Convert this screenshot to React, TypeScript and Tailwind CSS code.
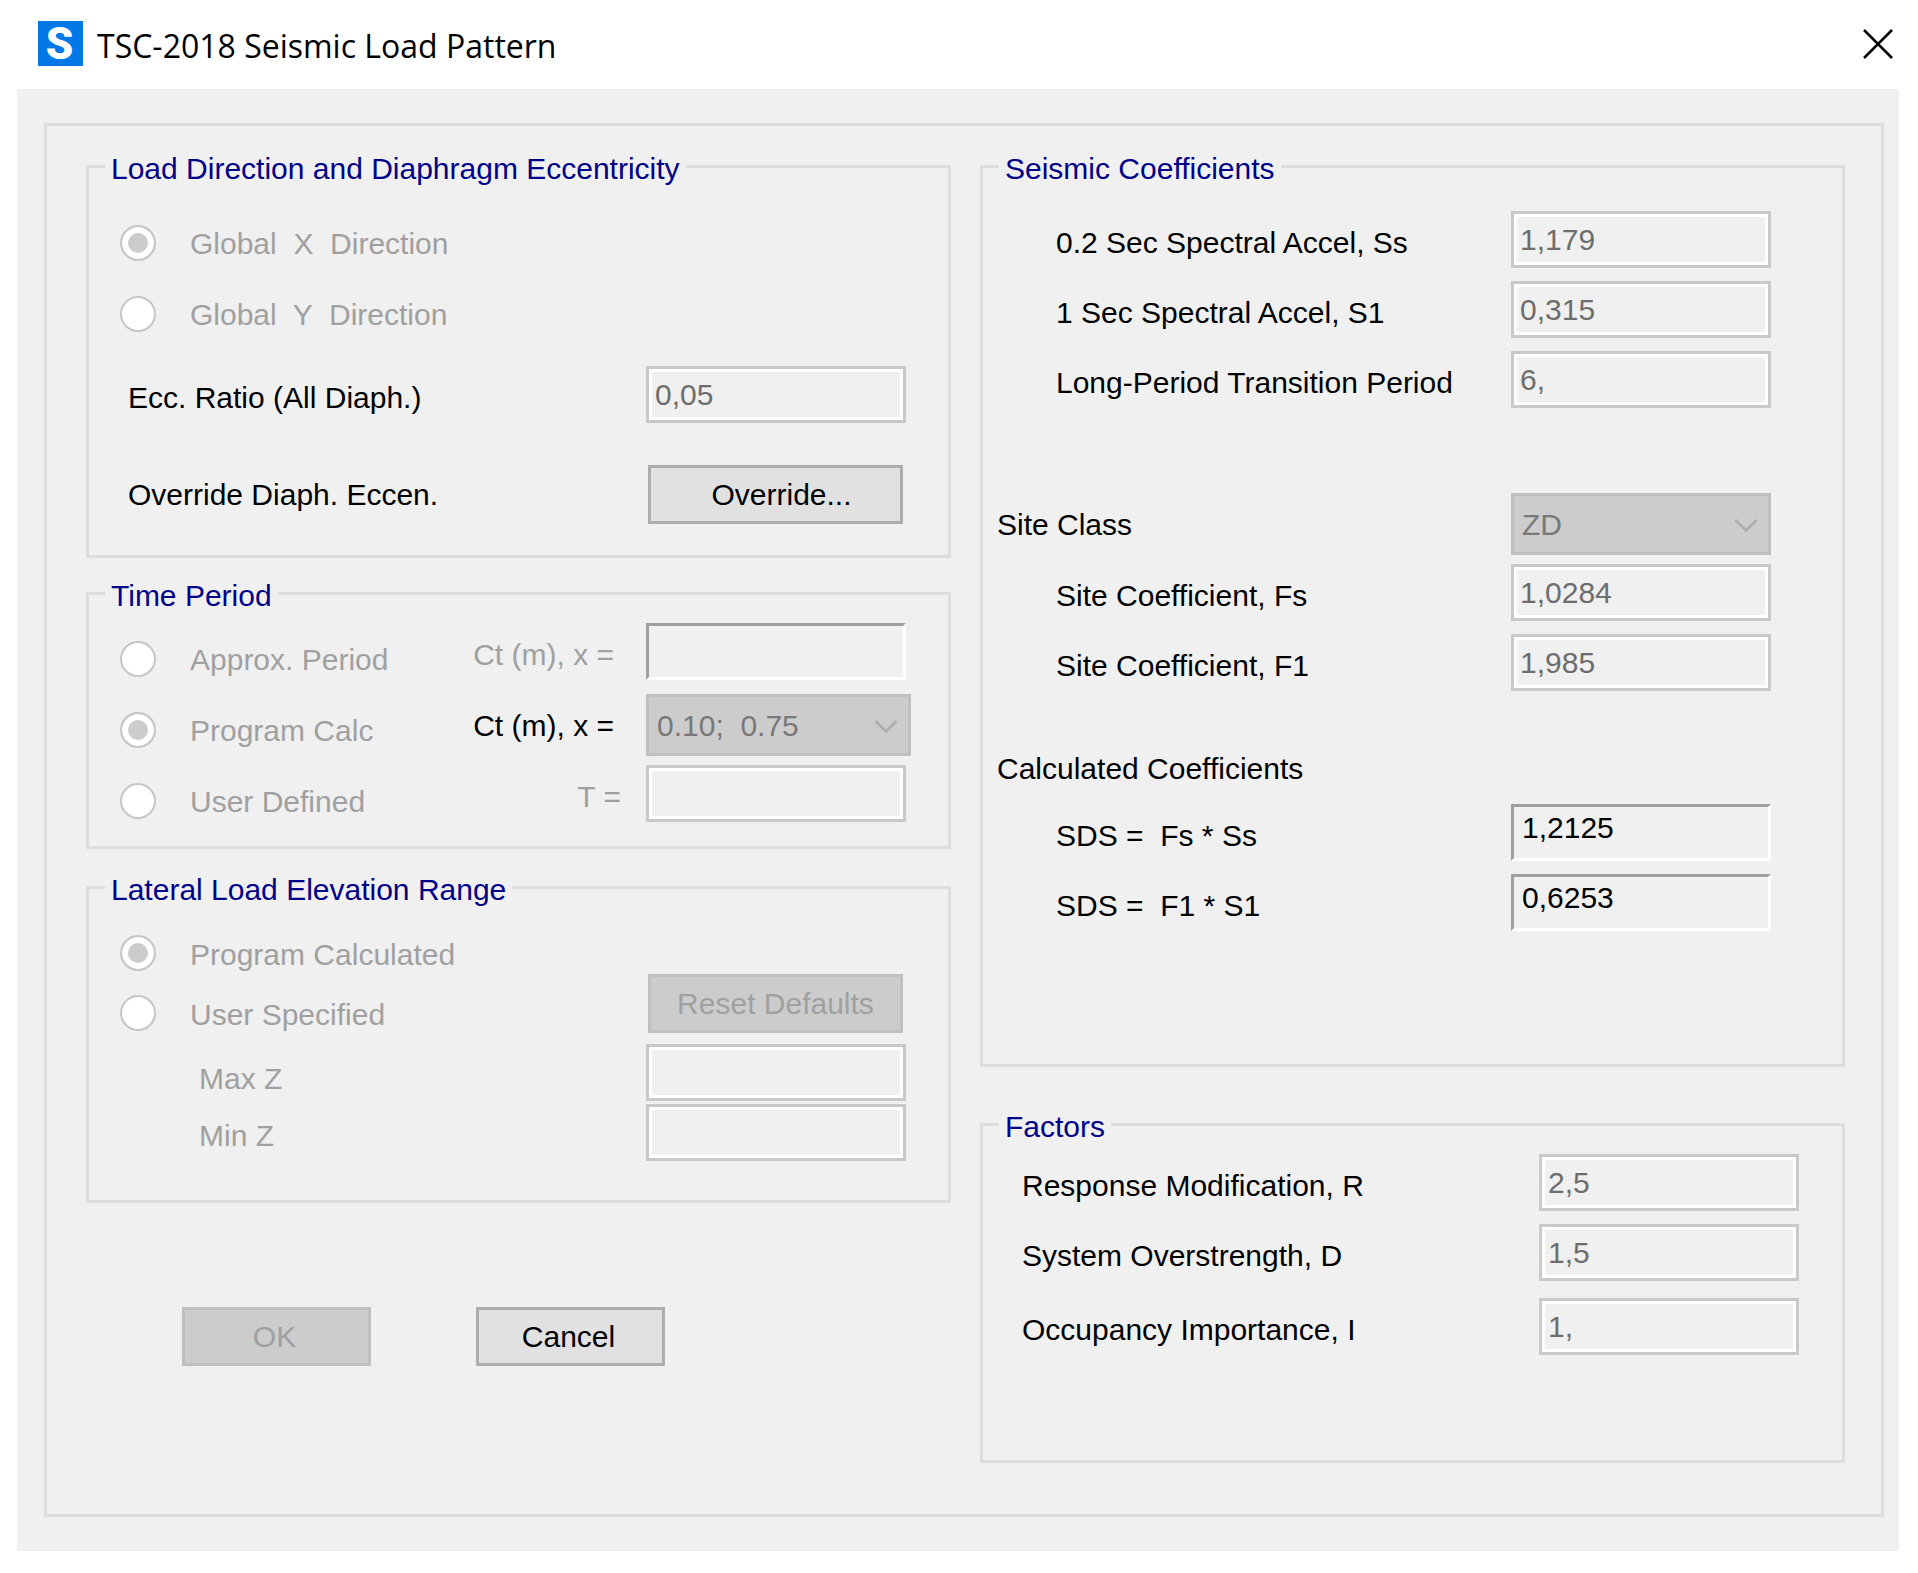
import { ReactNode } from "react";

interface FieldProps {
  id: string;
  label: string;
  value?: string;
  className?: string;
}

interface RadioProps {
  id: string;
  name: string;
  label: string;
  checked?: boolean;
  className?: string;
}

function Group({ title, className = "", children }: { title: string; className?: string; children: ReactNode }) {
  return (
    <fieldset className={`min-w-0 border-[3px] border-[#dddddd] ${className}`}>
      <legend className="ml-4 px-1.5 pt-1 leading-[35px] text-[#00008b]">{title}</legend>
      {children}
    </fieldset>
  );
}

function TextBox({ id, value = "" }: { id: string; value?: string }) {
  return (
    <input
      id={id}
      type="text"
      disabled
      defaultValue={value}
      className="block h-[57px] w-[260px] border-[3px] border-[#c9c9c9] bg-[#f0f0f0] px-1.5 text-[#6d6d6d] shadow-[inset_0_0_0_3px_#ffffff]"
    />
  );
}

// sunken read-only box
function ResultBox({ id, value = "" }: { id: string; value?: string }) {
  return (
    <input
      id={id}
      type="text"
      readOnly
      value={value}
      className="block h-[57px] w-[260px] border-[3px] border-t-[#a0a0a0] border-r-white border-b-white border-l-[#a0a0a0] bg-[#f0f0f0] px-2 pb-2.5 text-black outline-none"
    />
  );
}

function ComboBox({ id, value, className }: { id: string; value: string; className: string }) {
  return (
    <div className={`relative ${className}`}>
      <select
        id={id}
        disabled
        className="block h-[62px] w-full appearance-none border-[3px] border-[#bfbfbf] bg-[#cccccc] px-2 whitespace-pre text-[#787878] opacity-100"
      >
        <option>{value}</option>
      </select>
      <svg className="pointer-events-none absolute top-6 right-[13px] h-4 w-6" viewBox="0 0 24 16" fill="none">
        <path d="M1.5 3 L12 13.5 L22.5 3" stroke="#adadad" strokeWidth="2.5" />
      </svg>
    </div>
  );
}

function Radio({ id, name, label, checked = false, className = "h-[71px]" }: RadioProps) {
  return (
    <div className={`flex items-center pl-[31px] ${className}`}>
      <input
        id={id}
        name={name}
        type="radio"
        disabled
        defaultChecked={checked}
        className="h-9 w-9 shrink-0 appearance-none rounded-full border-2 border-[#c6c6c6] bg-white checked:bg-[#cccccc] checked:shadow-[inset_0_0_0_6px_#ffffff]"
      />
      <label htmlFor={id} className="pt-0.5 pl-[34px] whitespace-pre text-[#a0a0a0]">
        {label}
      </label>
    </div>
  );
}

function Field({ id, label, value, className = "" }: FieldProps) {
  return (
    <div className={`flex items-center justify-between ${className}`}>
      <label htmlFor={id} className="pt-1.5">
        {label}
      </label>
      <TextBox id={id} value={value} />
    </div>
  );
}

function ResultField({ id, label, value, className = "" }: FieldProps) {
  return (
    <div className={`flex items-center justify-between ${className}`}>
      <label htmlFor={id} className="pt-1.5 whitespace-pre">
        {label}
      </label>
      <ResultBox id={id} value={value} />
    </div>
  );
}

function Button({ label, disabled = false, className }: { label: string; disabled?: boolean; className: string }) {
  const color = disabled ? "border-[#bfbfbf] bg-[#cccccc] text-[#a0a0a0]" : "border-[#adadad] bg-[#e1e1e1] text-black";
  return (
    <button type="button" disabled={disabled} className={`h-[59px] border-[3px] ${color} ${className}`}>
      {label}
    </button>
  );
}

function LoadDirection() {
  return (
    <Group title="Load Direction and Diaphragm Eccentricity" className="pb-[31px]">
      <div className="pt-[21px]">
        <Radio id="dir-x" name="direction" label="Global  X  Direction" checked />
        <Radio id="dir-y" name="direction" label="Global  Y  Direction" />
      </div>
      <Field id="ecc" label="Ecc. Ratio (All Diaph.)" value="0,05" className="mt-[17px] pr-[42px] pl-[39px]" />
      <div className="mt-[42px] flex items-center justify-between pr-[45px] pl-[39px]">
        <span>Override Diaph. Eccen.</span>
        <Button label="Override..." className="w-[255px] pl-3" />
      </div>
    </Group>
  );
}

function TimePeriod() {
  return (
    <Group title="Time Period" className="pb-[10px]">
      <div className="flex justify-between pt-[10px] pr-[37px]">
        <div>
          <Radio id="approx" name="period" label="Approx. Period" />
          <Radio id="calc" name="period" label="Program Calc" checked />
          <Radio id="user" name="period" label="User Defined" />
        </div>
        <div>
          <div className="flex items-center justify-end pr-[5px]">
            <label htmlFor="ct-approx" className="pt-1.5 pr-8 whitespace-nowrap text-[#a0a0a0]">
              Ct (m), x =
            </label>
            <ResultBox id="ct-approx" />
          </div>
          <div className="mt-3.5 flex items-center justify-end">
            <label htmlFor="ct-calc" className="pr-8 whitespace-nowrap">
              Ct (m), x =
            </label>
            <ComboBox id="ct-calc" value={"0.10;\u00a0 0.75"} className="w-[265px]" />
          </div>
          <div className="mt-[9px] flex items-center justify-end pr-[5px]">
            <label htmlFor="t-user" className="pt-1.5 pr-[25px] whitespace-nowrap text-[#a0a0a0]">
              T =
            </label>
            <TextBox id="t-user" />
          </div>
        </div>
      </div>
    </Group>
  );
}

function ElevationRange() {
  return (
    <Group title="Lateral Load Elevation Range" className="pb-[39px]">
      <div className="flex items-end justify-between pr-[42px]">
        <div>
          <Radio id="elev-calc" name="elevation" label="Program Calculated" checked className="h-[60px]" />
          <Radio id="elev-user" name="elevation" label="User Specified" className="h-[60px]" />
          <div className="mt-1 flex flex-col pl-[110px] text-[#a0a0a0]">
            <label htmlFor="max-z" className="flex h-[57px] items-center pt-1.5">
              Max Z
            </label>
            <label htmlFor="min-z" className="flex h-[57px] items-center pt-1.5">
              Min Z
            </label>
          </div>
        </div>
        <div className="pt-[67px]">
          <Button label="Reset Defaults" disabled className="ml-0.5 w-[255px]" />
          <div className="mt-[11px] space-y-[3px]">
            <TextBox id="max-z" />
            <TextBox id="min-z" />
          </div>
        </div>
      </div>
    </Group>
  );
}

function SeismicCoefficients() {
  return (
    <Group title="Seismic Coefficients" className="pb-[133px]">
      <div className="pr-[71px]">
        <div className="space-y-[13px] pt-[25px] pl-[73px]">
          <Field id="ss" label="0.2 Sec Spectral Accel, Ss" value="1,179" />
          <Field id="s1" label="1 Sec Spectral Accel, S1" value="0,315" />
          <Field id="tl" label="Long-Period Transition Period" value="6," />
        </div>
        <div className="mt-[85px] flex items-center justify-between pl-3.5">
          <label htmlFor="site-class">Site Class</label>
          <ComboBox id="site-class" value="ZD" className="w-[260px]" />
        </div>
        <div className="mt-[9px] space-y-[13px] pl-[73px]">
          <Field id="fs" label="Site Coefficient, Fs" value="1,0284" />
          <Field id="f1" label="Site Coefficient, F1" value="1,985" />
        </div>
        <h2 className="mt-[54px] pt-1.5 pl-3.5">Calculated Coefficients</h2>
        <div className="mt-[18px] space-y-[13px] pl-[73px]">
          <ResultField id="sds" label="SDS =  Fs * Ss" value="1,2125" />
          <ResultField id="sd1" label="SDS =  F1 * S1" value="0,6253" />
        </div>
      </div>
    </Group>
  );
}

function Factors() {
  return (
    <Group title="Factors" className="pb-[105px]">
      <div className="pt-[10px] pr-[43px] pl-[39px]">
        <Field id="r" label="Response Modification, R" value="2,5" />
        <Field id="d" label="System Overstrength, D" value="1,5" className="mt-[13px]" />
        <Field id="i" label="Occupancy Importance, I" value="1," className="mt-[17px]" />
      </div>
    </Group>
  );
}

export default function App() {
  return (
    <div className="min-h-screen bg-white pb-[22px] font-['Liberation_Sans',Arial,sans-serif] text-[30px] leading-[35px] text-black">
      <header className="flex h-[89px] items-center pr-[25px] pb-0.5 pl-[38px]">
        <span className="flex h-[45px] w-[45px] items-center justify-center bg-[#0078e7] pt-0.5 pr-0.5 font-[Roboto,sans-serif] text-[44px] leading-[45px] font-black text-white">
          S
        </span>
        <h1 className="ml-3.5 pt-[3px] font-['Open_Sans','Segoe_UI',sans-serif] text-[32px] leading-[45px]">
          TSC-2018 Seismic Load Pattern
        </h1>
        <button type="button" aria-label="Close" className="ml-auto">
          <svg className="h-[30px] w-[30px]" viewBox="0 0 30 30" fill="none">
            <path d="M1 1 L29 29 M29 1 L1 29" stroke="#000000" strokeWidth="2.5" />
          </svg>
        </button>
      </header>
      <main className="mr-[19px] ml-[17px] bg-[#f0f0f0] pt-[34px] pr-[15px] pb-[34px] pl-[27px]">
        <div className="grid grid-cols-2 gap-[29px] border-[3px] border-[#dddddd] pt-[21px] pr-9 pb-[51px] pl-[39px]">
          <div>
            <LoadDirection />
            <div className="mt-4">
              <TimePeriod />
            </div>
            <div className="mt-[19px]">
              <ElevationRange />
            </div>
            <div className="mt-[104px] flex gap-[105px] pl-24">
              <Button label="OK" disabled className="w-[189px] pr-1" />
              <Button label="Cancel" className="w-[189px] pr-1" />
            </div>
          </div>
          <div>
            <SeismicCoefficients />
            <div className="mt-[38px]">
              <Factors />
            </div>
          </div>
        </div>
      </main>
    </div>
  );
}
